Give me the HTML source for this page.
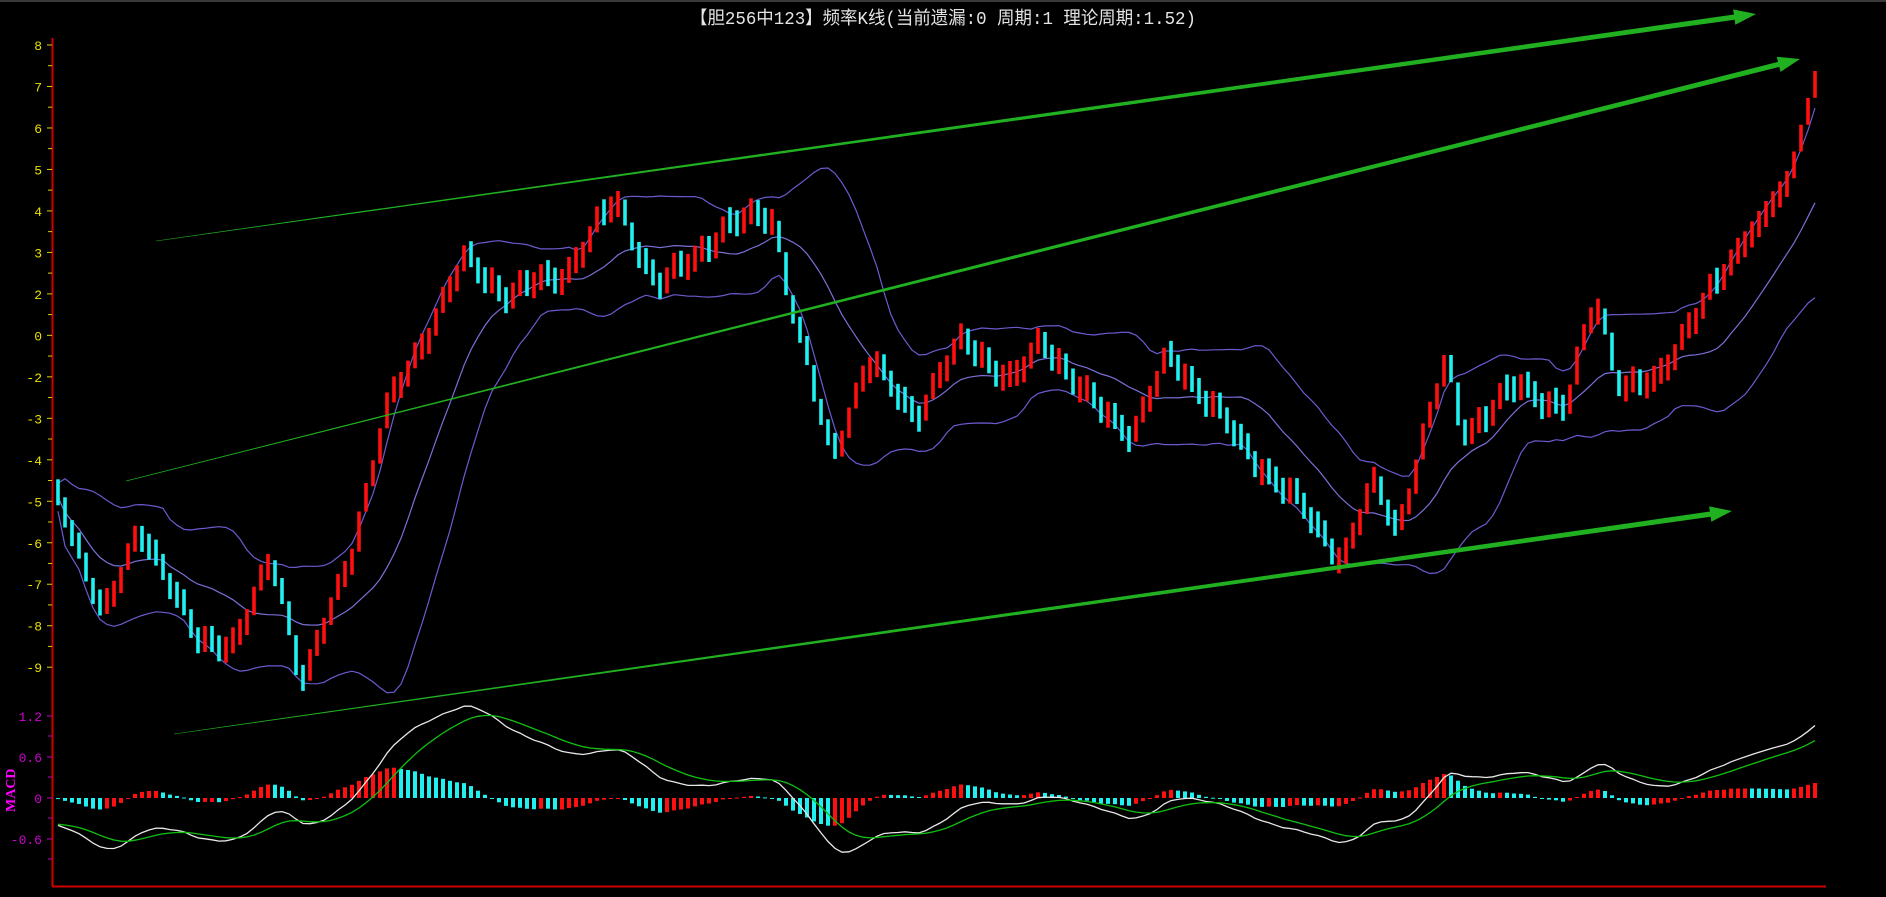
<!DOCTYPE html>
<html><head><meta charset="utf-8"><style>
html,body{margin:0;padding:0;background:#000;overflow:hidden}
svg{display:block}
</style></head><body>
<svg id="s" width="1886" height="897" xmlns="http://www.w3.org/2000/svg">
<rect width="1886" height="897" fill="#000"/>
<rect width="1886" height="2" fill="#3a3a3a"/>
<text x="690" y="24" fill="#e4e4e4" font-family="Liberation Mono, Noto Sans CJK SC, monospace" font-size="18" textLength="506" lengthAdjust="spacingAndGlyphs">【胆256中123】频率K线(当前遗漏:0 周期:1 理论周期:1.52)</text>
<g id="g"></g>
</svg>
<script>
var g=document.getElementById("g"),out="";
function add(s){out+=s;}
add('<line x1="52.5" y1="38" x2="52.5" y2="886" stroke="#d00000" stroke-width="2"/>');
add('<line x1="52" y1="886.5" x2="1826" y2="886.5" stroke="#d00000" stroke-width="2"/>');
var labs=["8","7","6","5","4","3","2","0","-2","-3","-4","-5","-6","-7","-8","-9"];
for(var i=0;i<labs.length;i++){var y=45+i*41.48;
 add('<line x1="47" y1="'+y+'" x2="52" y2="'+y+'" stroke="#e0d000"/>');
 if(i<15)add('<line x1="48" y1="'+(y+20.7)+'" x2="52" y2="'+(y+20.7)+'" stroke="#e0d000"/>');
 add('<text x="42" y="'+(y+5)+'" fill="#e8e000" font-family="Liberation Mono,monospace" font-size="13" text-anchor="end">'+labs[i]+'</text>');}
var ml=[["1.2",716],["0.6",757],["0",798],["-0.6",839]];
ml.forEach(function(m){add('<line x1="47" y1="'+m[1]+'" x2="52" y2="'+m[1]+'" stroke="#c000c0"/><text x="42" y="'+(m[1]+5)+'" fill="#d000d0" font-family="Liberation Mono,monospace" font-size="13" text-anchor="end">'+m[0]+'</text>');});
[736,777,818,859].forEach(function(y){add('<line x1="48" y1="'+y+'" x2="52" y2="'+y+'" stroke="#c000c0"/>');});
add('<text x="0" y="0" transform="translate(15,812) rotate(-90)" fill="#ff00ff" font-family="Liberation Serif,serif" font-weight="bold" font-size="14">MACD</text>');
var K=[[47,410],[85,515],[115,435],[160,530],[195,535],[225,460],[250,570],[290,460],[320,340],[385,215],[420,245],[470,225],[510,165],[545,240],[600,190],[640,175],[660,270],[690,380],[720,300],[760,345],[800,280],[840,320],[865,280],[900,330],[940,360],[970,295],[1005,335],[1030,370],[1070,410],[1115,465],[1140,400],[1160,440],[1200,300],[1215,360],[1260,320],[1300,340],[1325,245],[1345,320],[1375,320],[1400,270],[1430,230],[1460,185],[1485,150],[1515,35]];
K=K.map(function(k){return[k[0]*1.203,k[1]*1.203];});
function interp(x){for(var j=1;j<K.length;j++){if(x<=K[j][0]){var a=K[j-1],b=K[j],t=(x-a[0])/(b[0]-a[0]);return a[1]+(b[1]-a[1])*t;}}return K[K.length-1][1];}
var N=252,X=[],C=[];
for(i=0;i<N;i++){var x=58+i*7.0;X.push(x);var amp=i>N-12?0:1;C.push(interp(x)+amp*(8*Math.sin(i*1.7)+5*Math.sin(i*0.63)));}
var cs="";
for(i=0;i<N;i++){var o=i?C[i-1]:C[0]-10,c=C[i];var up=c<o;var t=Math.min(o,c),b=Math.max(o,c);if(b-t<26){var m=(t+b)/2;t=m-13;b=m+13;}
 cs+='<rect x="'+(X[i]-1.8)+'" y="'+t.toFixed(1)+'" width="3.6" height="'+(b-t).toFixed(1)+'" fill="'+(up?'#ff1010':'#20f0f0')+'"/>';}
var W=16,mid=[],up=[],lo=[];
for(i=0;i<N;i++){var s=0,n=0;for(var j=Math.max(0,i-W+1);j<=i;j++){s+=C[j];n++;}var mu=s/n,v=0;for(j=Math.max(0,i-W+1);j<=i;j++)v+=(C[j]-mu)*(C[j]-mu);var sd=Math.sqrt(v/n);mid.push(mu);up.push(mu-1.3*sd-14);lo.push(mu+1.3*sd+14);}
function pl(arr,col,w){var p="";for(var i=0;i<N;i++)p+=(i?"L":"M")+X[i].toFixed(1)+","+arr[i].toFixed(1);return '<path d="'+p+'" fill="none" stroke="'+col+'" stroke-width="'+(w||1.2)+'"/>';}
add(pl(up,"#6a5cd0"));add(pl(lo,"#6a5cd0"));add(pl(mid,"#7a70d8"));
add(cs);
var P=C.map(function(y){return(410-y)/41.5;});
var pre=[];for(i=0;i<40;i++)pre.push(P[0]+(40-i)*0.09);
var PP=pre.concat(P);
function ema(a,n){var k=2/(n+1),r=[a[0]];for(var i=1;i<a.length;i++)r.push(r[i-1]+k*(a[i]-r[i-1]));return r;}
var e1=ema(PP,12),e2=ema(PP,26),difA=PP.map(function(_,i){return e1[i]-e2[i];}),deaA=ema(difA,9);
var dif=difA.slice(40),dea=deaA.slice(40);
var mx=0;dif.forEach(function(d){mx=Math.max(mx,Math.abs(d));});var sc=1.35*68/mx;
var hs="";for(i=0;i<N;i++){var h=(dif[i]-dea[i])*sc*1.0;var ph=i?(dif[i-1]-dea[i-1]):0;var col=(dif[i]-dea[i])>ph?'#ff1010':'#20f0f0';
 hs+='<rect x="'+(X[i]-2)+'" y="'+(h>0?798-h:798).toFixed(1)+'" width="4" height="'+Math.max(1,Math.abs(h)).toFixed(1)+'" fill="'+col+'"/>';}
add(hs);
add(pl(dif.map(function(d){return 798-d*sc;}),"#e8e8e8",1.3));
add(pl(dea.map(function(d){return 798-d*sc;}),"#10c010",1.3));
function arrow(x1,y1,x2,y2,w0,w1,head){var dx=x2-x1,dy=y2-y1,L=Math.hypot(dx,dy),ux=dx/L,uy=dy/L,nx=-uy,ny=ux;
 var bx=x2-ux*head,by=y2-uy*head;
 var pts=[[x1+nx*w0,y1+ny*w0],[bx+nx*w1,by+ny*w1],[bx+nx*w1*3,by+ny*w1*3],[x2,y2],[bx-nx*w1*3,by-ny*w1*3],[bx-nx*w1,by-ny*w1],[x1-nx*w0,y1-ny*w0]];
 return '<polygon points="'+pts.map(function(p){return p[0].toFixed(1)+","+p[1].toFixed(1);}).join(" ")+'" fill="#20b020"/>';}
add(arrow(156,241,1756,14,0.3,2.6,22));
add(arrow(126,481,1800,59,0.3,2.6,22));
add(arrow(174,734,1732,511,0.3,2.6,22));
g.innerHTML=out;
</script>
</body></html>
